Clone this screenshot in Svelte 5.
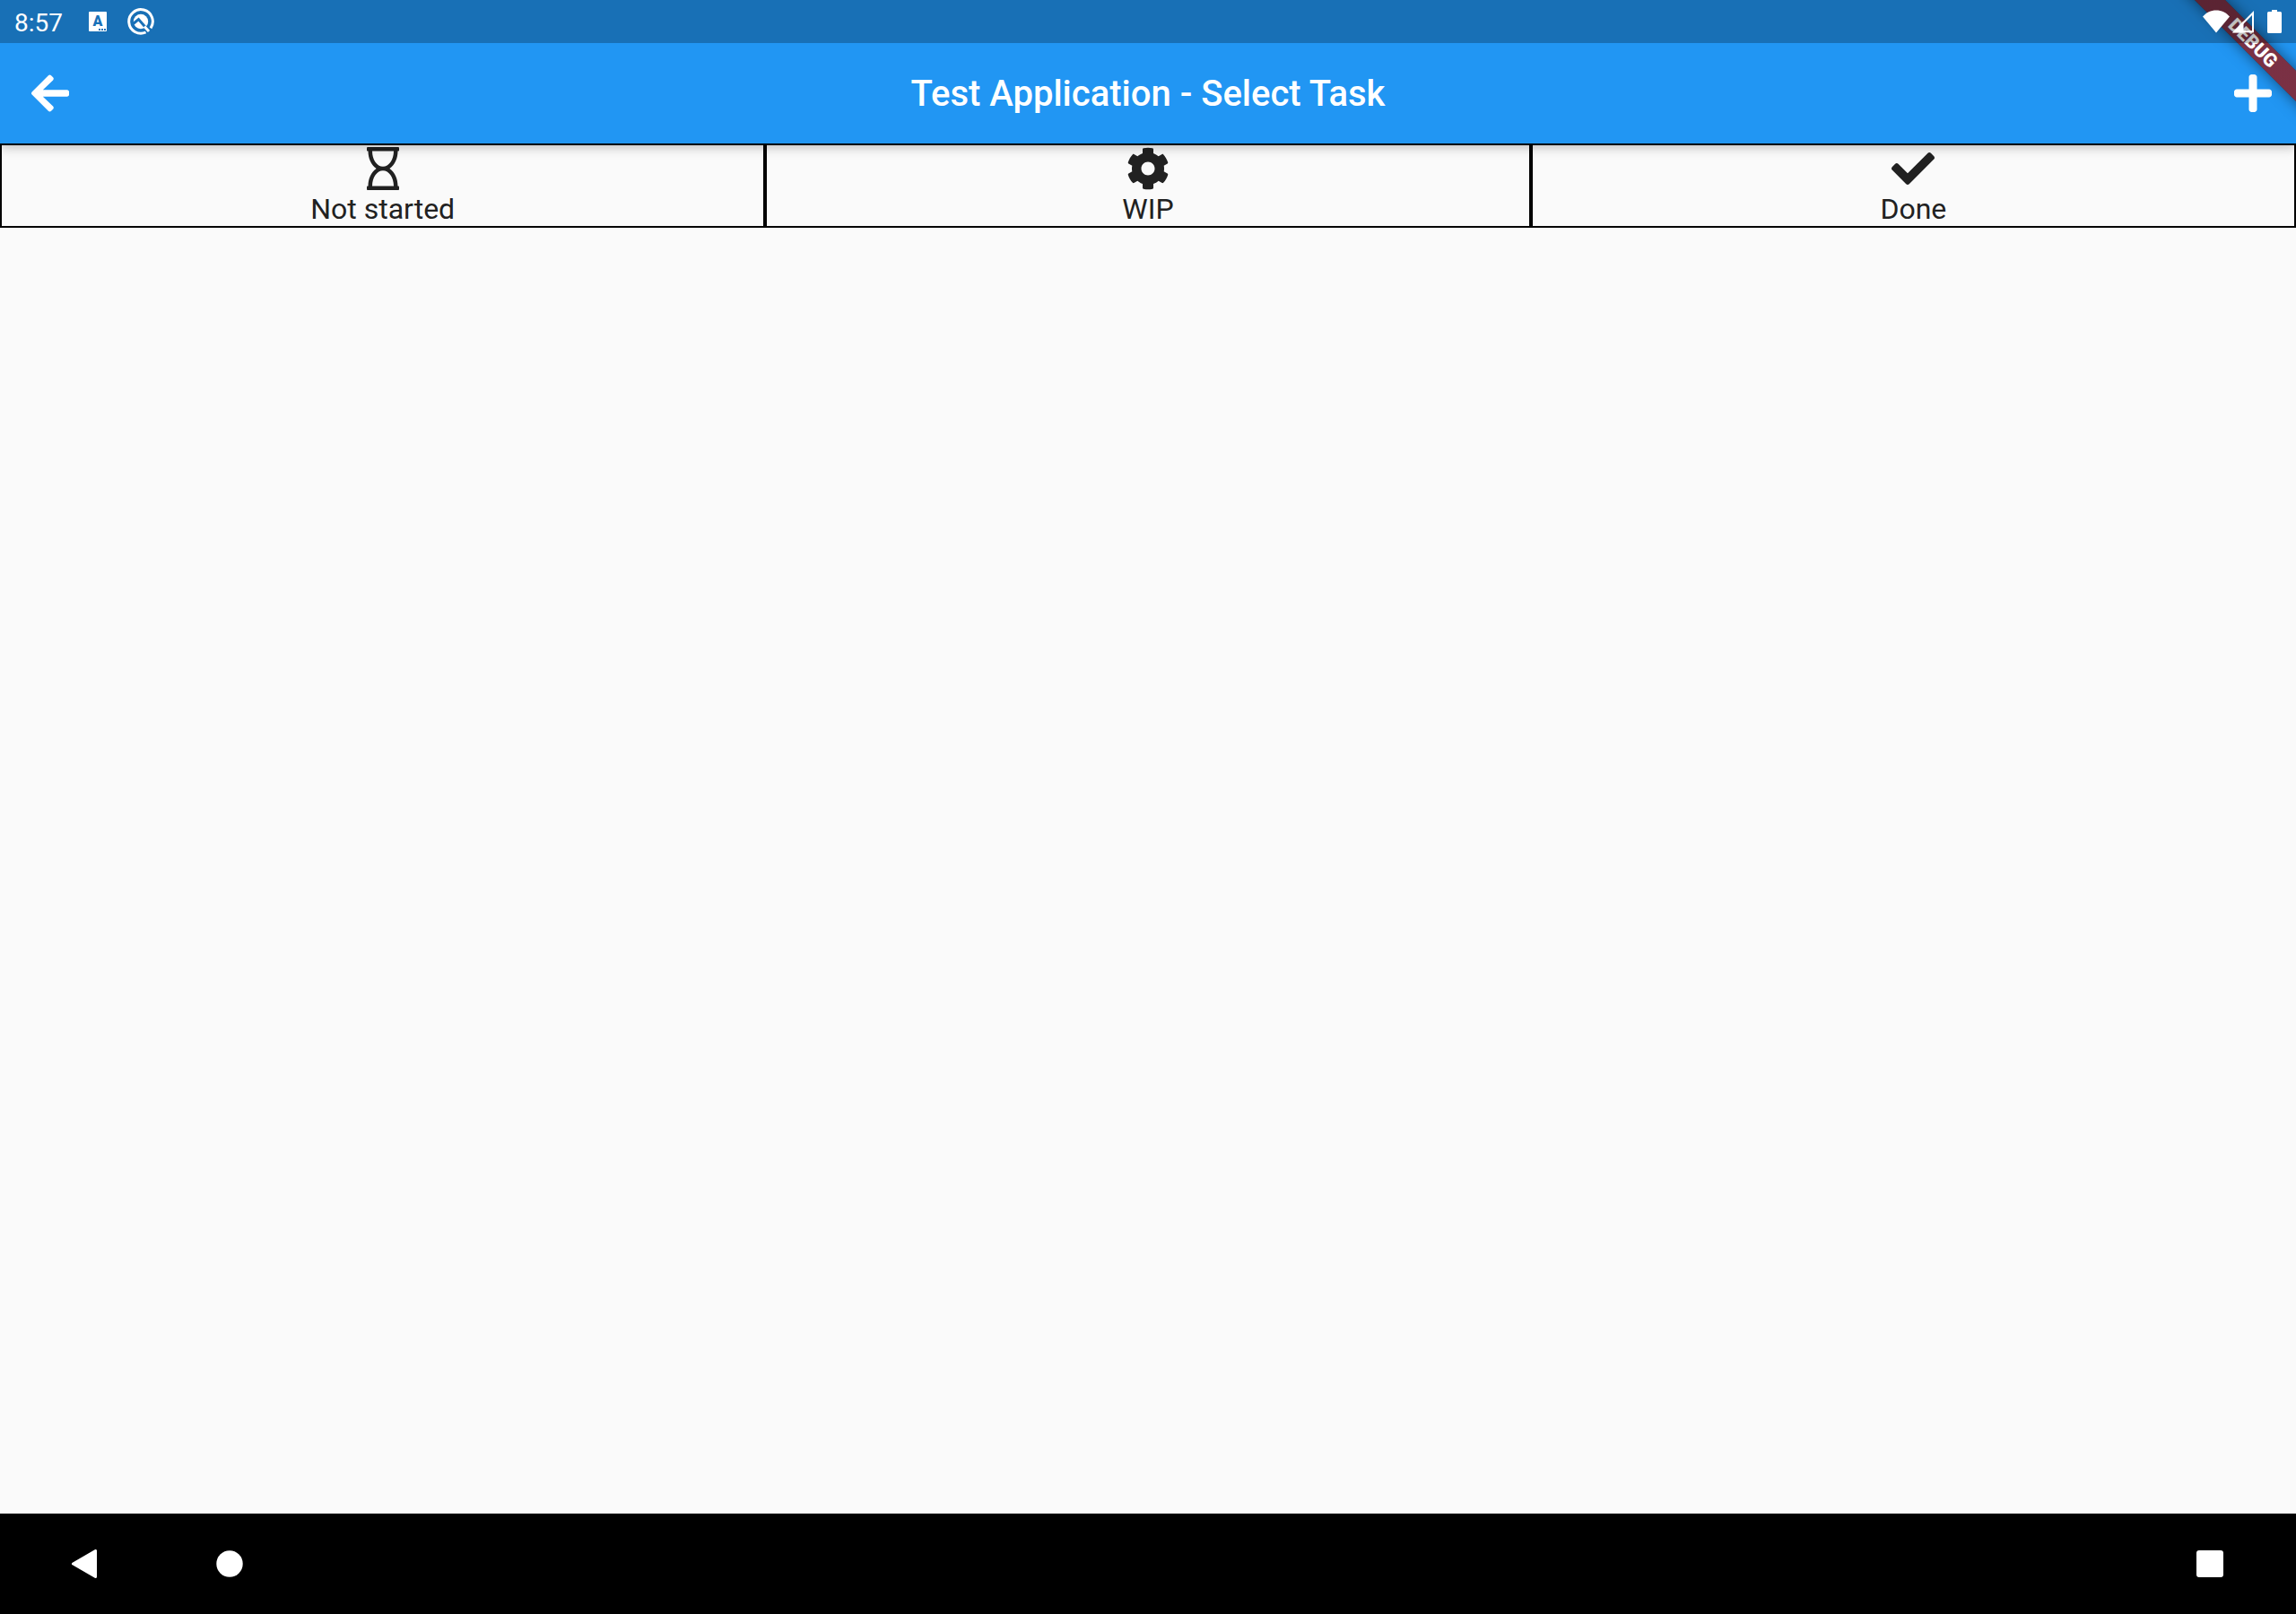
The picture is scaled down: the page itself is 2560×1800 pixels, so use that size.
<script>
  const tabs = [
    {
      label: 'Not started',
      width: 384,
      path: 'M368 48h4c6.627 0 12-5.373 12-12V12c0-6.627-5.373-12-12-12H12C5.373 0 0 5.373 0 12v24c0 6.627 5.373 12 12 12h4c0 80.564 32.188 165.807 97.18 208C47.899 298.381 16 383.9 16 464h-4c-6.627 0-12 5.373-12 12v24c0 6.627 5.373 12 12 12h360c6.627 0 12-5.373 12-12v-24c0-6.627-5.373-12-12-12h-4c0-80.564-32.188-165.807-97.18-208C336.102 213.619 368 128.1 368 48zM64 48h256c0 101.62-57.307 184-128 184S64 149.621 64 48zm256 416H64c0-101.62 57.308-184 128-184s128 82.38 128 184z'
    },
    {
      label: 'WIP',
      width: 512,
      path: 'M487.4 315.7l-42.6-24.6c4.3-23.2 4.3-47 0-70.2l42.6-24.6c4.9-2.8 7.1-8.6 5.5-14-11.1-35.6-30-67.8-54.7-94.6-3.8-4.1-10-5.1-14.8-2.3L380.8 110c-17.9-15.4-38.5-27.3-60.8-35.1V25.8c0-5.6-3.9-10.5-9.4-11.7-36.7-8.2-74.3-7.8-109.2 0-5.5 1.2-9.4 6.1-9.4 11.7V75c-22.2 7.9-42.8 19.8-60.8 35.1L88.7 85.5c-4.9-2.8-11-1.9-14.8 2.3-24.7 26.7-43.6 58.9-54.7 94.6-1.7 5.4.6 11.2 5.5 14L67.3 221c-4.3 23.2-4.3 47 0 70.2l-42.6 24.6c-4.9 2.8-7.1 8.6-5.5 14 11.1 35.6 30 67.8 54.7 94.6 3.8 4.1 10 5.1 14.8 2.3l42.6-24.6c17.9 15.4 38.5 27.3 60.8 35.1v49.2c0 5.6 3.9 10.5 9.4 11.7 36.7 8.2 74.3 7.8 109.2 0 5.5-1.2 9.4-6.1 9.4-11.7v-49.2c22.2-7.9 42.8-19.8 60.8-35.1l42.6 24.6c4.9 2.8 11 1.9 14.8-2.3 24.7-26.7 43.6-58.9 54.7-94.6 1.5-5.5-.7-11.3-5.6-14.1zM256 336c-44.1 0-80-35.9-80-80s35.9-80 80-80 80 35.9 80 80-35.9 80-80 80z'
    },
    {
      label: 'Done',
      width: 512,
      path: 'M173.898 439.404l-166.4-166.4c-9.997-9.997-9.997-26.206 0-36.204l36.203-36.204c9.997-9.998 26.207-9.998 36.204 0L192 312.69 432.095 72.596c9.997-9.997 26.207-9.997 36.204 0l36.203 36.204c9.997 9.997 9.997 26.206 0 36.204l-294.4 294.401c-9.998 9.997-26.207 9.997-36.204-.001z'
    }
  ];
</script>

<div class="screen">
  <header class="top">
    <div class="status">
      <div class="status-group">
        <span class="clock">8:57</span>
        <span class="lang">A
          <svg class="dots" width="8" height="2" viewBox="0 0 8 2" aria-hidden="true">
            <path d="M0 0h2v2H0zM3 0h2v2H3zM6 0h2v2H6z" />
          </svg>
        </span>
        <svg width="32" height="32" viewBox="0 0 32 32" aria-hidden="true">
          <path d="M22.2 27.7A13.3 13.3 0 1 1 27.4 22.8" fill="none" stroke="#fff" stroke-width="3" transform="rotate(3 16 16)" />
          <circle cx="16" cy="16" r="8.2" fill="#fff" />
          <path d="M7.500 18.500L13.500 13.500L26 28" fill="none" stroke="#1971b8" stroke-width="3" />
          <path d="M20 21.500L25 27" fill="none" stroke="#fff" stroke-width="3" />
        </svg>
      </div>
      <div class="status-group">
        <svg width="30" height="26" viewBox="0 0 30 26" aria-hidden="true">
          <path d="M15 25.500L0 7.500C4 3 9 .5 15 .5S26 3 30 7.500z" fill="#fff" />
        </svg>
        <svg class="signal" width="26" height="26" viewBox="0 0 26 26" aria-hidden="true">
          <path d="M3.500 24.200L24 3.500V24.200z" fill="none" stroke="#fff" stroke-width="2" />
          <path d="M1 25.500L13.500 12.500V25.500z" fill="#fff" />
        </svg>
        <svg width="16" height="26" viewBox="0 0 16 26" aria-hidden="true">
          <path d="M5 0h6v2h3.500a1.500 1.500 0 0 1 1.500 1.500v21a1.500 1.500 0 0 1-1.500 1.500h-13a1.500 1.500 0 0 1-1.500-1.500v-21a1.500 1.500 0 0 1 1.500-1.500H5z" fill="#fff" />
        </svg>
      </div>
    </div>
    <div class="bar">
      <button class="icon-button" aria-label="Back">
        <svg width="42" height="48" viewBox="0 0 448 512">
          <path fill="#fff" d="M257.5 445.1l-22.2 22.2c-9.4 9.4-24.6 9.4-33.9 0L7 273c-9.4-9.4-9.4-24.6 0-33.9L201.4 44.7c9.4-9.4 24.6-9.4 33.9 0l22.2 22.2c9.5 9.5 9.3 25-.4 34.3L136.600 216H424c13.300 0 24 10.700 24 24v32c0 13.300-10.700 24-24 24H136.600l120.500 114.800c9.800 9.300 10 24.800.4 34.300z" />
        </svg>
      </button>
      <h1>Test Application - Select Task</h1>
      <button class="icon-button add" aria-label="Add task">
        <svg width="42" height="48" viewBox="0 0 448 512">
          <path fill="#fff" d="M416 208H272V64c0-17.670-14.330-32-32-32h-32c-17.670 0-32 14.330-32 32v144H32c-17.670 0-32 14.330-32 32v32c0 17.670 14.330 32 32 32h144v144c0 17.670 14.330 32 32 32h32c17.670 0 32-14.330 32-32V304h144c17.670 0 32-14.330 32-32v-32c0-17.670-14.330-32-32-32z" />
        </svg>
      </button>
    </div>
    <div class="ribbon-clip">
      <div class="ribbon">DEBUG</div>
    </div>
  </header>

  <nav class="tabs" aria-label="Task status">
    {#each tabs as tab}
      <button class="tab">
        <svg height="48" viewBox="0 0 {tab.width} 512" aria-hidden="true">
          <path d={tab.path} />
        </svg>
        <span>{tab.label}</span>
      </button>
    {/each}
  </nav>

  <main></main>

  <footer class="system">
    <div class="system-group">
      <button aria-label="System back">
        <svg width="32" height="32" viewBox="0 0 32 32">
          <path d="M3.500 16L28.500 1.500V30.500z" fill="#fff" stroke="#fff" stroke-width="3" stroke-linejoin="round" />
        </svg>
      </button>
      <button aria-label="Home">
        <svg width="32" height="32" viewBox="0 0 32 32"><circle cx="16" cy="16" r="14.700" fill="#fff" /></svg>
      </button>
    </div>
    <button aria-label="Recent apps">
      <svg width="32" height="32" viewBox="0 0 32 32"><rect x="1" y="1" width="30" height="30" rx="3" fill="#fff" /></svg>
    </button>
  </footer>
</div>

<style>
  :global(body) {
    background: #fafafa;
  }
  .screen {
    display: flex;
    flex-direction: column;
    min-height: 100vh;
    background: #fafafa;
    font-family: Roboto, sans-serif;
    color: #212121;
  }
  button {
    margin: 0;
    padding: 0;
    border: 0;
    background: none;
    font: inherit;
    color: inherit;
    cursor: pointer;
  }
  svg {
    display: block;
    flex: none;
  }
  .top {
    position: relative;
    z-index: 1;
    background: #2196f3;
    color: #fff;
    box-shadow: 0 4px 12px rgba(0, 0, 0, 0.26);
  }
  .status {
    position: relative;
    z-index: 2;
    display: flex;
    align-items: center;
    justify-content: space-between;
    height: 48px;
    padding: 0 16px;
    background: rgba(0, 0, 0, 0.25);
  }
  .status-group {
    display: flex;
    align-items: center;
  }
  .clock {
    margin-right: 29px;
    padding-top: 3px;
    font-size: 28px;
    line-height: 32px;
  }
  .lang {
    position: relative;
    width: 20px;
    height: 22px;
    margin-right: 22px;
    border-radius: 1px;
    background: #fff;
    color: #1971b8;
    font-size: 16px;
    font-weight: 900;
    line-height: 22px;
    text-align: center;
  }
  .dots {
    position: absolute;
    right: 1px;
    bottom: 1px;
    fill: #1971b8;
  }
  .signal {
    margin: 0 14px 0 2px;
  }
  .bar {
    display: flex;
    align-items: center;
    justify-content: space-between;
    height: 112px;
  }
  .icon-button {
    display: flex;
    align-items: center;
    justify-content: center;
    width: 112px;
    height: 112px;
  }
  .add {
    justify-content: flex-end;
    padding-right: 27px;
  }
  h1 {
    margin: 0;
    padding-top: 2px;
    font-size: 40px;
    font-weight: 500;
    line-height: 48px;
  }
  .ribbon-clip {
    position: absolute;
    inset: 0;
    z-index: 1;
    overflow: hidden;
    pointer-events: none;
  }
  .ribbon {
    position: absolute;
    top: 36px;
    right: -52px;
    width: 200px;
    height: 24px;
    background:
      linear-gradient(rgba(183, 28, 28, 0.63), rgba(183, 28, 28, 0.63)),
      rgba(0, 0, 0, 0.44);
    box-shadow: 0 0 16px rgba(0, 0, 0, 0.5);
    font-size: 21px;
    font-weight: 900;
    line-height: 24px;
    text-align: center;
    transform: rotate(45deg);
  }
  .tabs {
    display: flex;
  }
  .tab {
    display: flex;
    flex: 1;
    flex-direction: column;
    align-items: center;
    gap: 2px;
    padding-top: 2px;
    border: 2px solid #000;
    font-size: 32px;
    line-height: 38px;
  }
  .tab svg {
    fill: #212121;
  }
  main {
    flex: 1;
  }
  .system {
    display: flex;
    align-items: center;
    justify-content: space-between;
    height: 112px;
    padding: 0 80px 0 78px;
    background: #000;
  }
  .system-group {
    display: flex;
    gap: 130px;
  }
</style>
